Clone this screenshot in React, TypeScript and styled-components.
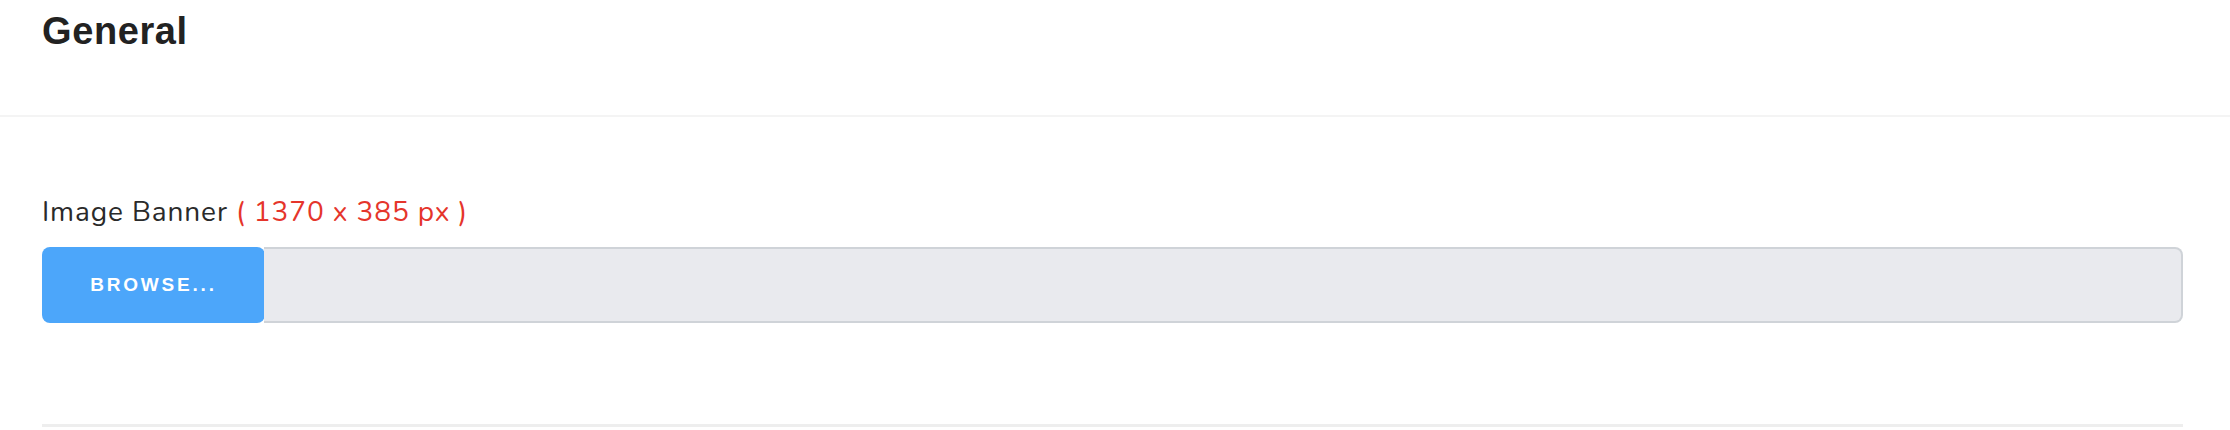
import React from "react";
import styled, { createGlobalStyle } from "styled-components";

const GlobalStyle = createGlobalStyle`
  html, body { margin: 0; padding: 0; background: #ffffff; }
  body { width: 2230px; height: 430px; overflow: hidden; }
  * { box-sizing: border-box; }
`;

const Page = styled.div`
  width: 2230px;
  display: flex;
  flex-direction: column;
`;

const Header = styled.header`
  height: 117px;
  padding: 9px 0 0 42px;
  border-bottom: 2px solid #f4f4f4;
`;

const Title = styled.h1`
  margin: 0;
  font-family: "Liberation Sans", Arial, sans-serif;
  font-weight: 700;
  font-size: 38px;
  line-height: 44px;
  color: #222222;
  letter-spacing: 0.6px;
`;

const Body = styled.section`
  padding: 77px 47px 0 42px;
  display: flex;
  flex-direction: column;
`;

const Label = styled.label`
  font-family: "Nunito", "Lato", sans-serif;
  font-size: 28px;
  line-height: 36px;
  color: #2a2a2a;
  letter-spacing: 0.9px;
`;

const Hint = styled.span`
  color: #e5352b;
`;

const FileField = styled.div`
  margin-top: 17px;
  display: flex;
  height: 76px;
`;

const BrowseButton = styled.button`
  width: 223px;
  height: 76px;
  border: none;
  border-radius: 8px;
  background: #4ca6fa;
  color: #ffffff;
  font-family: "Liberation Sans", Arial, sans-serif;
  font-weight: 700;
  font-size: 19px;
  letter-spacing: 2.8px;
  padding: 0;
  cursor: pointer;
`;

const FileName = styled.div`
  flex: 1;
  margin-left: -1px;
  background: #e9eaee;
  border: 2px solid #cfd3d8;
  border-left: none;
  border-radius: 0 8px 8px 0;
`;

const NextCard = styled.div`
  margin-top: 101px;
  height: 20px;
  border-top: 3px solid #eeeeee;
`;

export default function App() {
  return (
    <Page>
      <GlobalStyle />
      <Header>
        <Title>General</Title>
      </Header>
      <Body>
        <Label>
          Image Banner <Hint>( 1370 x 385 px )</Hint>
        </Label>
        <FileField>
          <BrowseButton>BROWSE...</BrowseButton>
          <FileName />
        </FileField>
        <NextCard />
      </Body>
    </Page>
  );
}
